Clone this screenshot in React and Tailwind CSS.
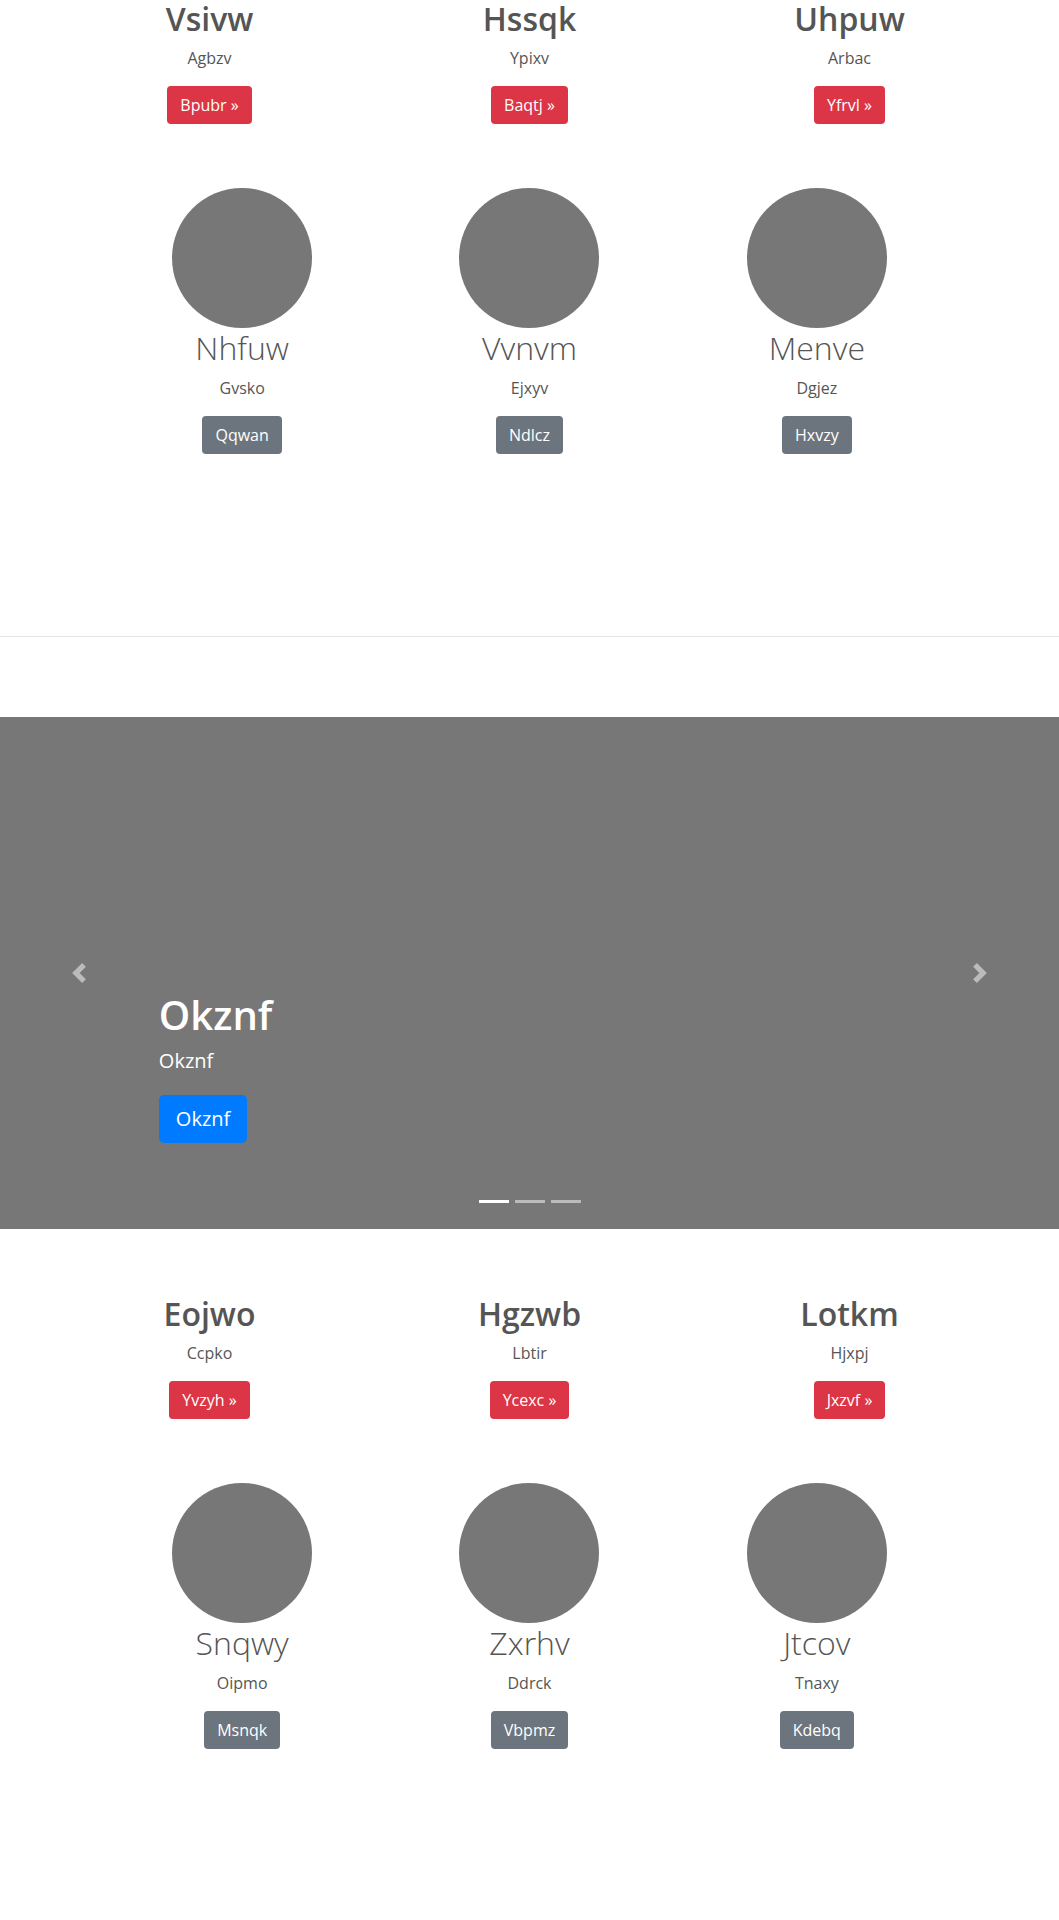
const topFeatures = [
  { title: 'Vsivw', text: 'Agbzv', cta: 'Bpubr' },
  { title: 'Hssqk', text: 'Ypixv', cta: 'Baqtj' },
  { title: 'Uhpuw', text: 'Arbac', cta: 'Yfrvl' },
];
const topPeople = [
  { name: 'Nhfuw', text: 'Gvsko', cta: 'Qqwan' },
  { name: 'Vvnvm', text: 'Ejxyv', cta: 'Ndlcz' },
  { name: 'Menve', text: 'Dgjez', cta: 'Hxvzy' },
];
const bottomFeatures = [
  { title: 'Eojwo', text: 'Ccpko', cta: 'Yvzyh' },
  { title: 'Hgzwb', text: 'Lbtir', cta: 'Ycexc' },
  { title: 'Lotkm', text: 'Hjxpj', cta: 'Jxzvf' },
];
const bottomPeople = [
  { name: 'Snqwy', text: 'Oipmo', cta: 'Msnqk' },
  { name: 'Zxrhv', text: 'Ddrck', cta: 'Vbpmz' },
  { name: 'Jtcov', text: 'Tnaxy', cta: 'Kdebq' },
];

function Features({ items, className = '' }) {
  return (
    <div className={`w-[960px] mx-auto grid grid-cols-3 text-center ${className}`}>
      {items.map((f) => (
        <div key={f.title} className="px-[15px]">
          <h2 className="text-[32px] font-semibold leading-[1.2] mb-2">{f.title}</h2>
          <p className="text-base leading-6 mb-4">{f.text}</p>
          <button className="inline-block bg-[#dc3545] text-white text-base leading-6 px-[13px] py-[7px] rounded">
            {f.cta} &raquo;
          </button>
        </div>
      ))}
    </div>
  );
}

function People({ items, className = '' }) {
  return (
    <div className={`w-[862px] mx-auto grid grid-cols-3 text-center ${className}`}>
      {items.map((p) => (
        <div key={p.name} className="flex flex-col items-center">
          <div className="w-[140px] h-[140px] rounded-full bg-[#777] mb-px" />
          <h2 className="text-[32px] font-light leading-[1.2] mb-2">{p.name}</h2>
          <p className="text-base leading-6 mb-4">{p.text}</p>
          <button className="inline-block bg-[#6c757d] text-white text-base leading-6 px-[13px] py-[7px] rounded">
            {p.cta}
          </button>
        </div>
      ))}
    </div>
  );
}

function Carousel() {
  return (
    <div className="relative h-[512px] bg-[#777] flex flex-col justify-end pl-[15%] pb-[86px] text-white">
      <h1 className="text-[40px] font-semibold leading-[1.2] mb-[7px]">Okznf</h1>
      <p className="text-[20px] leading-[30px] mb-[19px]">Okznf</p>
      <div>
        <button className="bg-[#007bff] text-white text-[20px] leading-[30px] px-[17px] py-[9px] rounded-[5px]">
          Okznf
        </button>
      </div>

      <div className="absolute left-0 top-0 bottom-0 w-[15%] flex items-center justify-center">
        <svg width="20" height="20" viewBox="0 0 8 8" fill="rgba(255,255,255,0.5)">
          <path d="M5.25 0l-4 4 4 4 1.5-1.5-2.5-2.5 2.5-2.5-1.5-1.5z" />
        </svg>
      </div>
      <div className="absolute right-0 top-0 bottom-0 w-[15%] flex items-center justify-center">
        <svg width="20" height="20" viewBox="0 0 8 8" fill="rgba(255,255,255,0.5)">
          <path d="M2.75 0l-1.5 1.5 2.5 2.5-2.5 2.5 1.5 1.5 4-4-4-4z" />
        </svg>
      </div>

      <div className="absolute left-0 right-0 bottom-[26px] flex justify-center">
        <span className="w-[30px] h-[3px] mx-[3px] bg-white" />
        <span className="w-[30px] h-[3px] mx-[3px] bg-white/50" />
        <span className="w-[30px] h-[3px] mx-[3px] bg-white/50" />
      </div>
    </div>
  );
}

export default function App() {
  return (
    <div className="bg-white text-[#555] min-h-[1920px]" style={{ fontFamily: '"Open Sans", "Noto Sans", sans-serif' }}>
      <Features items={topFeatures} />
      <People items={topPeople} className="mt-16" />
      <hr className="mt-[182px] border-0 border-t border-[#e5e5e5]" />
      <div className="h-20" />
      <Carousel />
      <Features items={bottomFeatures} className="mt-[66px]" />
      <People items={bottomPeople} className="mt-16" />
    </div>
  );
}
